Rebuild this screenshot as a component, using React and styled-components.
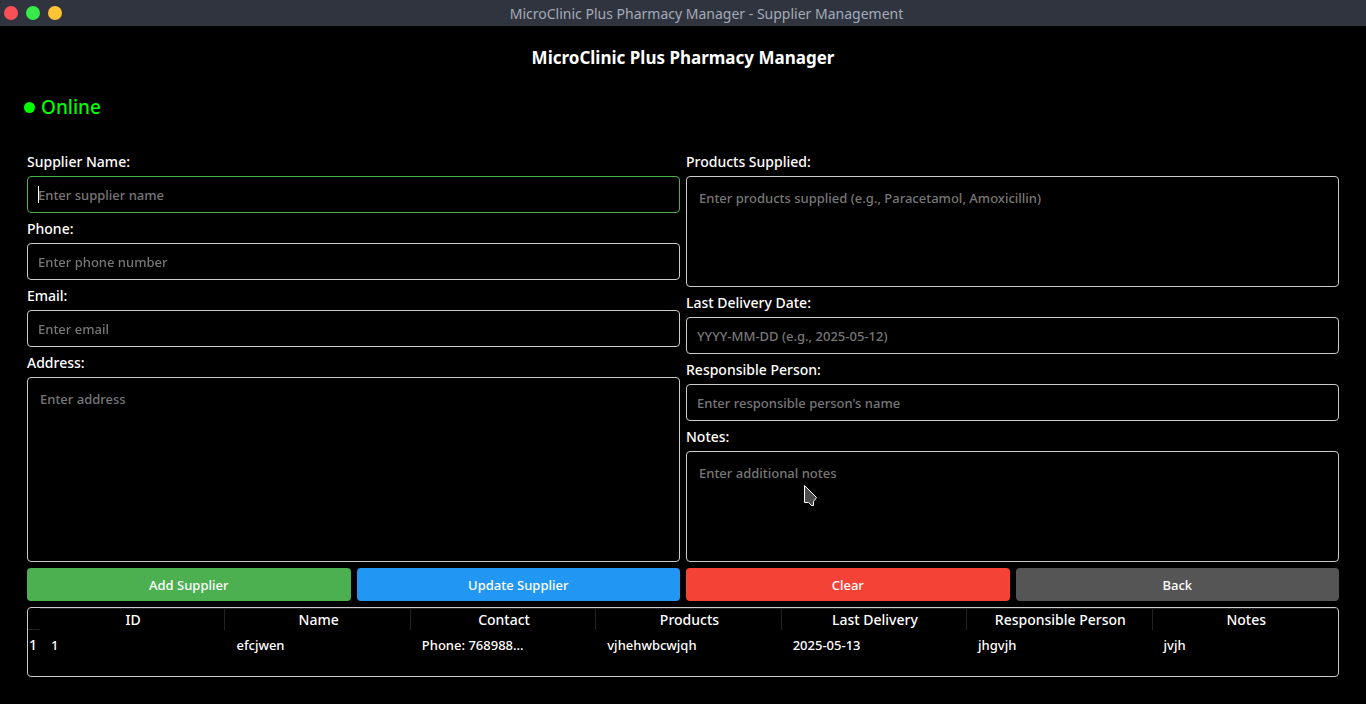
import React from "react";
import styled, { createGlobalStyle } from "styled-components";

const GlobalStyle = createGlobalStyle`
  *, *::before, *::after { box-sizing: border-box; }
  body {
    margin: 0;
    background: #000;
    color: #fff;
    font-family: "Noto Sans", "Open Sans", sans-serif;
    font-size: 14px;
    font-weight: 500;
  }
`;

const Window = styled.div`
  display: flex;
  flex-direction: column;
  min-height: 100vh;
`;

const TitleBar = styled.header`
  display: flex;
  align-items: center;
  height: 26px;
  padding: 0 15px 0 4px;
  background: #2f343f;
`;

const WindowControls = styled.div`
  display: flex;
  gap: 8px;
`;

const ControlDot = styled.button`
  width: 14px;
  height: 14px;
  padding: 0;
  border: 0;
  border-radius: 50%;
  background: ${(p) => p.$color};
`;

const WindowTitle = styled.span`
  flex: 1;
  padding-top: 2px;
  color: #a4abb8;
  font-size: 14px;
  font-weight: 400;
  line-height: 20px;
  text-align: center;
`;

const Content = styled.main`
  display: flex;
  flex: 1;
  flex-direction: column;
  gap: 6px;
  padding: 20px 27px 27px;
`;

const Heading = styled.h1`
  margin: 0;
  font-size: 17px;
  font-weight: 700;
  line-height: 24px;
  text-align: center;
`;

const Status = styled.p`
  display: flex;
  align-items: center;
  gap: 6px;
  margin: 18px 0 26px -3px;
  color: #0f0;
  font-size: 19px;
  line-height: 26px;
`;

const StatusDot = styled.span`
  width: 11px;
  height: 11px;
  border-radius: 50%;
  background: currentColor;
`;

const Form = styled.form`
  display: flex;
  flex: 1;
  flex-direction: column;
  gap: 6px;
`;

const Columns = styled.div`
  display: grid;
  flex: 1;
  grid-template-columns: 1fr 1fr;
  gap: 6px;
`;

const Column = styled.div`
  display: flex;
  flex-direction: column;
  gap: 6px;
`;

const FieldGroup = styled.div`
  display: flex;
  flex: ${(p) => (p.$grow ? "1 1 0" : "none")};
  flex-direction: column;
  gap: 4px;
`;

const Label = styled.label`
  font-size: 14px;
  line-height: 20px;
`;

const ControlBox = styled.div`
  position: relative;
  display: flex;
  flex: 1;
`;

const Input = styled.input`
  width: 100%;
  height: 37px;
  padding: 0 10px;
  border: 1px solid #ccc;
  border-radius: 4px;
  outline: 0;
  background: #000;
  color: #fff;
  font: inherit;
  font-size: 13px;
  caret-color: transparent;
  &::placeholder { color: #777; opacity: 1; }
  &:focus { border-color: #4caf50; }
`;

const TextArea = styled.textarea`
  width: 100%;
  min-height: 60px;
  padding: 12px;
  border: 1px solid #ccc;
  border-radius: 4px;
  outline: 0;
  background: #000;
  color: #fff;
  font: inherit;
  font-size: 13px;
  line-height: 18px;
  resize: none;
  &::placeholder { color: #777; opacity: 1; }
`;

const Caret = styled.span`
  position: absolute;
  top: 10px;
  left: 11px;
  width: 1px;
  height: 17px;
  background: #fff;
`;

const Pointer = styled.svg`
  position: absolute;
  top: 33px;
  left: 118px;
  width: 16px;
  height: 23px;
  pointer-events: none;
`;

const Actions = styled.div`
  display: grid;
  grid-template-columns: repeat(4, 1fr);
  gap: 6px;
`;

const ActionButton = styled.button`
  height: 33px;
  padding: 0;
  border: 0;
  border-radius: 4px;
  background: ${(p) => p.$color};
  color: #fff;
  font: inherit;
  font-size: 13px;
`;

const TableFrame = styled.div`
  height: 70px;
  border: 1px solid #ccc;
  border-radius: 4px;
  overflow: hidden;
`;

const Table = styled.table`
  width: 100%;
  border-collapse: separate;
  border-spacing: 0;
  table-layout: fixed;
`;

const HeadCell = styled.th`
  height: 22px;
  padding: 0 0 0 2px;
  border-top: 1px solid #222;
  border-right: 1px solid #222;
  font-size: 14px;
  font-weight: 500;
  line-height: 18px;
  &:last-child { border-right: 0; }
`;

const CornerCell = styled.td`
  width: 12px;
  padding: 0;
  border-bottom: 1px solid #222;
`;

const RowHead = styled.th`
  padding: 0 1px;
  font-size: 14px;
  font-weight: 500;
  line-height: 30px;
  text-align: left;
`;

const Cell = styled.td`
  padding: 0 11px;
  font-size: 13px;
  line-height: 30px;
  white-space: nowrap;
`;

function Field({ id, label, placeholder, multiline, focused, children }) {
  return (
    <FieldGroup $grow={multiline}>
      <Label htmlFor={id}>{label}</Label>
      <ControlBox>
        {multiline ? (
          <TextArea id={id} placeholder={placeholder} />
        ) : (
          <Input id={id} type="text" placeholder={placeholder} autoFocus={focused} />
        )}
        {children}
      </ControlBox>
    </FieldGroup>
  );
}

const columns = ["ID", "Name", "Contact", "Products", "Last Delivery", "Responsible Person", "Notes"];
const suppliers = [["1", "efcjwen", "Phone: 768988...", "vjhehwbcwjqh", "2025-05-13", "jhgvjh", "jvjh"]];

export default function App() {
  return (
    <Window>
      <GlobalStyle />
      <TitleBar>
        <WindowControls>
          <ControlDot $color="#f94f57" aria-label="Close" />
          <ControlDot $color="#38ea49" aria-label="Minimize" />
          <ControlDot $color="#fdc436" aria-label="Maximize" />
        </WindowControls>
        <WindowTitle>MicroClinic Plus Pharmacy Manager - Supplier Management</WindowTitle>
      </TitleBar>
      <Content>
        <Heading>MicroClinic Plus Pharmacy Manager</Heading>
        <Status>
          <StatusDot />
          Online
        </Status>
        <Form onSubmit={(e) => e.preventDefault()}>
          <Columns>
            <Column>
              <Field id="name" label="Supplier Name:" placeholder="Enter supplier name" focused>
                <Caret />
              </Field>
              <Field id="phone" label="Phone:" placeholder="Enter phone number" />
              <Field id="email" label="Email:" placeholder="Enter email" />
              <Field id="address" label="Address:" placeholder="Enter address" multiline />
            </Column>
            <Column>
              <Field
                id="products"
                label="Products Supplied:"
                placeholder="Enter products supplied (e.g., Paracetamol, Amoxicillin)"
                multiline
              />
              <Field id="delivery" label="Last Delivery Date:" placeholder="YYYY-MM-DD (e.g., 2025-05-12)" />
              <Field id="person" label="Responsible Person:" placeholder="Enter responsible person's name" />
              <Field id="notes" label="Notes:" placeholder="Enter additional notes" multiline>
                <Pointer viewBox="0 0 16 23" aria-hidden="true">
                  <path
                    d="M.5 1.5V18.5H4.5L7.5 21.5H9.5V17.5L12.5 13.5Z"
                    fill="#4d4d4d"
                    stroke="#fff"
                    strokeWidth="1"
                  />
                </Pointer>
              </Field>
            </Column>
          </Columns>
          <Actions>
            <ActionButton type="submit" $color="#4caf50">Add Supplier</ActionButton>
            <ActionButton type="button" $color="#2196f3">Update Supplier</ActionButton>
            <ActionButton type="reset" $color="#f44336">Clear</ActionButton>
            <ActionButton type="button" $color="#555">Back</ActionButton>
          </Actions>
        </Form>
        <TableFrame>
          <Table>
            <thead>
              <tr>
                <CornerCell />
                {columns.map((name) => (
                  <HeadCell key={name} scope="col">{name}</HeadCell>
                ))}
              </tr>
            </thead>
            <tbody>
              {suppliers.map((row, i) => (
                <tr key={row[0]}>
                  <RowHead scope="row">{i + 1}</RowHead>
                  {row.map((value, c) => (
                    <Cell key={columns[c]}>{value}</Cell>
                  ))}
                </tr>
              ))}
            </tbody>
          </Table>
        </TableFrame>
      </Content>
    </Window>
  );
}
